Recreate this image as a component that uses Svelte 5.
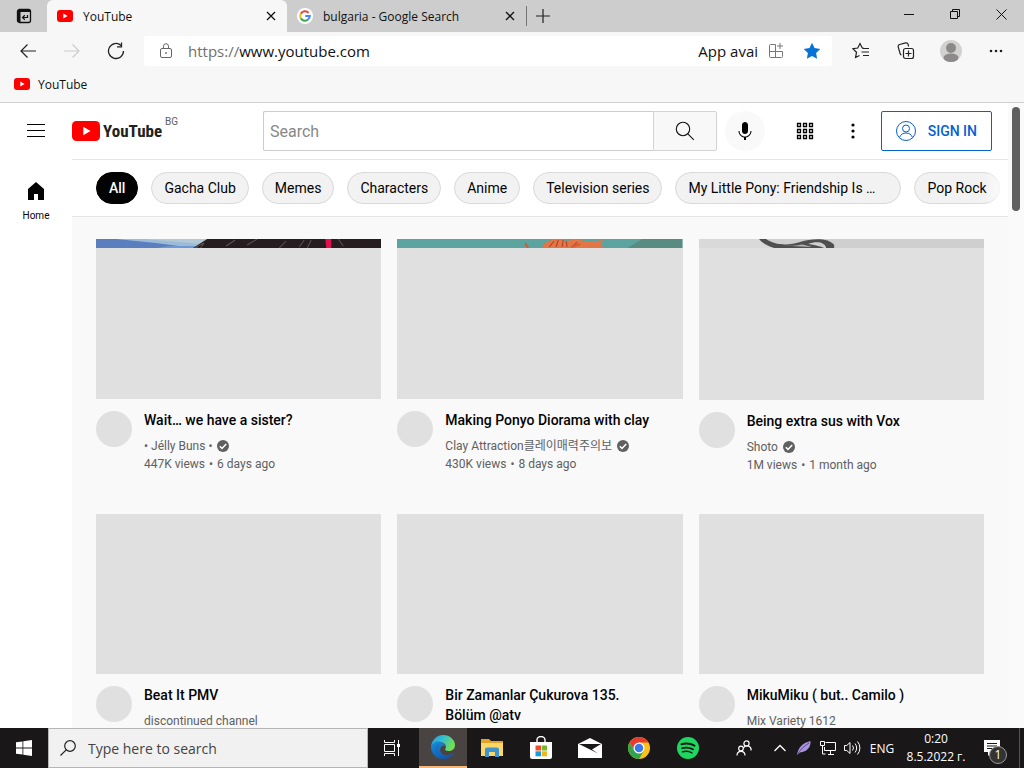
<script lang="ts">
	interface Video {
		title: string;
		channel?: string;
		verified?: boolean;
		views?: string;
		age?: string;
		art?: string;
	}

	const chips = [
		'All',
		'Gacha Club',
		'Memes',
		'Characters',
		'Anime',
		'Television series',
		'My Little Pony: Friendship Is …',
		'Pop Rock'
	];

	const videos: Video[] = [
		{
			title: 'Wait… we have a sister?',
			channel: '• Jélly Buns •',
			verified: true,
			views: '447K views',
			age: '6 days ago',
			art: 'sister'
		},
		{
			title: 'Making Ponyo Diorama with clay',
			channel: 'Clay Attraction클레이매력주의보',
			verified: true,
			views: '430K views',
			age: '8 days ago',
			art: 'ponyo'
		},
		{
			title: 'Being extra sus with Vox',
			channel: 'Shoto',
			verified: true,
			views: '1M views',
			age: '1 month ago',
			art: 'vox'
		},
		{ title: 'Beat It PMV', channel: 'discontinued channel' },
		{ title: 'Bir Zamanlar Çukurova 135. Bölüm @atv' },
		{ title: 'MikuMiku ( but.. Camilo )', channel: 'Mix Variety 1612' }
	];

	let selectedChip = $state('All');
	let query = $state('');
	let address = $state('www.youtube.com');
	let taskQuery = $state('');
</script>

{#snippet youtubeIcon()}
	<svg width="16" height="16" viewBox="0 0 16 16" aria-hidden="true">
		<rect y="2" width="16" height="12" rx="3" fill="#f00" />
		<path d="M6.3 5.5v5L10.6 8z" fill="#fff" />
	</svg>
{/snippet}

{#snippet closeIcon()}
	<svg width="10" height="10" viewBox="0 0 10 10" stroke="#111" stroke-width="1.3" aria-hidden="true">
		<path d="M1 1l8 8M9 1L1 9" />
	</svg>
{/snippet}

<div class="desktop">
	<div class="tabs">
		<button class="tab-actions" aria-label="Tab actions">
			<svg width="16" height="16" viewBox="0 0 16 16" fill="none" stroke="#111" aria-hidden="true">
				<rect x="1.5" y="1.5" width="13" height="13" rx="2" stroke-width="1.3" />
				<path d="M2 3h12" stroke-width="2" />
				<path d="M3 4v10" stroke-width="3" />
				<path d="M11.5 7v2.5H7M8.8 7.3L6.5 9.5l2.3 2.2" stroke-width="1.2" />
			</svg>
		</button>
		<div class="tab active">
			{@render youtubeIcon()}
			<span>YouTube</span>
			<button aria-label="Close YouTube tab">{@render closeIcon()}</button>
		</div>
		<div class="tab">
			<svg width="16" height="16" viewBox="0 0 16 16" fill="none" stroke-width="2" aria-hidden="true">
				<circle cx="8" cy="8" r="8" fill="#fff" />
				<path d="M11.6 4.8A4.8 4.8 0 0 0 3.8 5.7" stroke="#ea4335" />
				<path d="M3.8 5.7a4.8 4.8 0 0 0 0 4.6" stroke="#fbbc05" />
				<path d="M3.8 10.3a4.8 4.8 0 0 0 7.3 1.3" stroke="#34a853" />
				<path d="M11.1 11.6A4.8 4.8 0 0 0 12.8 8H8.3" stroke="#4285f4" />
			</svg>
			<span>bulgaria - Google Search</span>
			<button aria-label="Close Google Search tab">{@render closeIcon()}</button>
		</div>
		<button class="new-tab" aria-label="New tab">
			<svg width="14" height="14" viewBox="0 0 14 14" stroke="#222" stroke-width="1.2" aria-hidden="true">
				<path d="M7 0v14M0 7h14" />
			</svg>
		</button>
		<div class="window-controls">
			<button aria-label="Minimize">
				<svg width="10" height="10" viewBox="0 0 10 10" stroke="#111"><path d="M0 5.5h10" /></svg>
			</button>
			<button aria-label="Restore">
				<svg width="10" height="10" viewBox="0 0 10 10" fill="none" stroke="#111">
					<path d="M.5 2.5h7v7h-7zM2.5 2.5v-2h7v7h-2" />
				</svg>
			</button>
			<button aria-label="Close window">
				<svg width="11" height="11" viewBox="0 0 11 11" stroke="#111"><path d="M.5.5l10 10M10.5.5l-10 10" /></svg>
			</button>
		</div>
	</div>

	<div class="toolbar">
		<div class="nav">
			<button aria-label="Back">
				<svg width="16" height="16" viewBox="0 0 16 16" fill="none" stroke="#222" stroke-width="1.2">
					<path d="M16 8H1M7.5 1.5L1 8l6.5 6.5" />
				</svg>
			</button>
			<button aria-label="Forward" disabled>
				<svg width="16" height="16" viewBox="0 0 16 16" fill="none" stroke="#ccc" stroke-width="1.2">
					<path d="M0 8h15M8.5 1.5L15 8l-6.5 6.5" />
				</svg>
			</button>
			<button aria-label="Refresh">
				<svg width="18" height="18" viewBox="0 0 18 18" fill="none" stroke="#222" stroke-width="1.3">
					<path d="M16.5 9A7.5 7.5 0 1 1 14 3.4M14.5.5v4.3H10" />
				</svg>
			</button>
		</div>
		<div class="address">
			<svg width="14" height="16" viewBox="0 0 14 16" fill="none" stroke="#666" aria-hidden="true">
				<rect x="1.5" y="5.5" width="11" height="9" rx="1.5" />
				<path d="M4.5 5.5V3.2a2.5 2.5 0 0 1 5 0v2.3" />
				<circle cx="7" cy="10" r=".5" fill="#555" />
			</svg>
			<label for="address">https://</label>
			<input id="address" bind:value={address} />
			<span class="available">App avai</span>
			<button aria-label="Install app">
				<svg width="16" height="16" viewBox="0 0 16 16" fill="none" stroke="#777">
					<path d="M7.5 1.5h-5a1 1 0 0 0-1 1v11a1 1 0 0 0 1 1h11a1 1 0 0 0 1-1v-5h-13M7.5 1.5v13M12 0v6M9 3h6" />
				</svg>
			</button>
			<button aria-label="Edit favorite">
				<svg width="18" height="18" viewBox="0 0 18 18" fill="#0873d6">
					<path d="M9 .8l2.5 5.3 5.8.8-4.2 4.1 1 5.8L9 14l-5.1 2.8 1-5.8L.7 6.9l5.8-.8z" />
				</svg>
			</button>
		</div>
		<div class="tools">
			<button aria-label="Favorites">
				<svg width="18" height="18" viewBox="0 0 18 18" fill="none" stroke="#222" stroke-width="1.2">
					<path d="M11.5 6.2l-1.2-.2L8 1.500 5.800 6l-5 .7 3.700 3.500-.9 5.300 3.900-2M10.500 6.500H17M9.500 10H17M11 13.500h6" />
				</svg>
			</button>
			<button aria-label="Collections">
				<svg width="18" height="18" viewBox="0 0 18 18" fill="none" stroke="#222" stroke-width="1.2">
					<rect x="6.5" y="6.5" width="10" height="10" rx="2" />
					<path d="M11.5 8.5v6M8.5 11.5h6M4.5 13a2 2 0 0 1-1.4-1.5L1.2 4.8a2 2 0 0 1 1.4-2.3l6.2-1.6a2 2 0 0 1 2.3 1.4l.5 2.2" />
				</svg>
			</button>
			<button aria-label="Profile">
				<svg width="22" height="22" viewBox="0 0 22 22">
					<circle cx="11" cy="11" r="11" fill="#d3d1cf" />
					<circle cx="11" cy="8" r="5" fill="#8c8a89" />
					<ellipse cx="11" cy="17.8" rx="7.5" ry="4.2" fill="#8c8a89" />
				</svg>
			</button>
			<button aria-label="Settings and more">
				<svg width="14" height="4" viewBox="0 0 14 4" fill="#222">
					<circle cx="2" cy="2" r="1.3" /><circle cx="7" cy="2" r="1.3" /><circle cx="12" cy="2" r="1.3" />
				</svg>
			</button>
		</div>
	</div>

	<div class="bookmarks">
		<a href="#youtube">{@render youtubeIcon()}YouTube</a>
	</div>

	<div class="viewport">
		<div class="page">
			<header>
				<div class="start">
					<button class="round" aria-label="Guide">
						<svg width="18" height="14" viewBox="0 0 18 14" stroke="#030303">
							<path d="M0 .5h18M0 6.5h18M0 12.500h18" />
						</svg>
					</button>
					<a class="logo" href="#home">
						<svg width="28" height="20" viewBox="0 0 28 20" aria-hidden="true">
							<rect width="28" height="20" rx="4.5" fill="#f00" />
							<path d="M11.3 5.8v8.4l7.2-4.2z" fill="#fff" />
						</svg>
						<span>YouTube</span>
						<sup>BG</sup>
					</a>
				</div>
				<form class="search" onsubmit={(e) => e.preventDefault()}>
					<input bind:value={query} placeholder="Search" aria-label="Search" />
					<button class="submit" aria-label="Search YouTube">
						<svg width="20" height="20" viewBox="0 0 20 20" fill="none" stroke="#111" stroke-width="1.1">
							<circle cx="8" cy="8" r="6.7" /><path d="M12.8 12.8l6 6" />
						</svg>
					</button>
					<button type="button" class="round mic" aria-label="Search with your voice">
						<svg width="24" height="24" viewBox="0 0 24 24">
							<path d="M12 3c-1.66 0-3 1.37-3 3.07v5.86c0 1.7 1.34 3.07 3 3.07s3-1.37 3-3.07V6.07C15 4.37 13.66 3 12 3zm6.5 9h-1c0 3.03-2.47 5.5-5.5 5.5S6.5 15.03 6.5 12h-1c0 3.24 2.39 5.93 5.5 6.41V21h2v-2.59c3.11-.48 5.5-3.17 5.5-6.41z" fill="#030303" />
						</svg>
					</button>
				</form>
				<div class="end">
					<button class="round" aria-label="YouTube apps">
						<svg width="18" height="18" viewBox="0 0 18 18" fill="none" stroke="#030303" stroke-width="1.3">
							<path d="M1.500 1.500h3v3h-3zM7.500 1.500h3v3h-3zM13.500 1.500h3v3h-3zM1.500 7.500h3v3h-3zM7.500 7.500h3v3h-3zM13.500 7.500h3v3h-3zM1.500 13.500h3v3h-3zM7.500 13.500h3v3h-3zM13.500 13.500h3v3h-3z" />
						</svg>
					</button>
					<button class="round" aria-label="Settings">
						<svg width="4" height="16" viewBox="0 0 4 16" fill="#030303">
							<circle cx="2" cy="2" r="1.6" /><circle cx="2" cy="8" r="1.6" /><circle cx="2" cy="14" r="1.6" />
						</svg>
					</button>
					<a class="sign-in" href="#signin">
						<svg width="20" height="20" viewBox="0 0 20 20" fill="none" stroke="#065fd4" aria-hidden="true">
							<circle cx="10" cy="10" r="9.5" />
							<circle cx="10" cy="7.5" r="3.5" />
							<path d="M3.5 16.5C4.5 13.5 7 12 10 12s5.5 1.500 6.500 4.500" />
						</svg>
						SIGN IN
					</a>
				</div>
			</header>

			<div class="body">
				<nav>
					<a href="#home">
						<svg width="24" height="24" viewBox="0 0 24 24" aria-hidden="true">
							<path d="M4 10v11h6v-6h4v6h6V10l-8-7z" fill="#030303" />
						</svg>
						Home
					</a>
				</nav>
				<main>
					<div class="chips">
						{#each chips as chip}
							<button
								class:selected={chip === selectedChip}
								class:long={chip.endsWith('…')}
								onclick={() => (selectedChip = chip)}
							>
								{chip}
							</button>
						{/each}
					</div>
					<div class="grid">
						{#each videos as video}
							<article>
								<div class="thumb">
									{#if video.art === 'sister'}
										<svg viewBox="0 0 285 9" preserveAspectRatio="none" aria-hidden="true">
											<path d="M0 0h285v9H0z" fill="#5b7fbe" />
											<path d="M20 0h92L98 9 60 4z" fill="#9dbbd8" />
											<path d="M48 0h64l-6 5z" fill="#b4c9d6" />
											<path d="M62 9l10-2 28 0 4 2z" fill="#6e98d5" />
											<path d="M97 9l14-9h174v9z" fill="#251d1f" />
											<path d="M99 9l9-5-4 5zM130 7l9-6M151 6l10-6M183 9l7-7M203 8l5-7M211 9l4-8M247 7l-5-7" stroke="#5c5552" />
											<path d="M229 0h6v9h-5z" fill="#e50f4b" />
										</svg>
									{:else if video.art === 'ponyo'}
										<svg viewBox="0 0 285 9" preserveAspectRatio="none" aria-hidden="true">
											<path d="M0 0h285v9H0z" fill="#5ba49f" />
											<path d="M245 0h40v9h-55z" fill="#578c80" />
											<path d="M145 9c1-6 8-8 14-9l11 2 8-2 15 3 13-2-3 4 4 4z" fill="#e27745" />
											<path d="M152 8l5-6M159 8l2-7M165 8l1-7M170 8l-1-6M176 7l4-4" stroke="#ad3c30" />
											<path d="M128 4l3 5M174 8l9-3" stroke="#d75b31" stroke-width="2" />
										</svg>
									{:else if video.art === 'vox'}
										<svg viewBox="0 0 285 9" preserveAspectRatio="none" aria-hidden="true">
											<path d="M0 0h285v9H0z" fill="#cfcfcf" />
											<path d="M0 0h60l16 9H0z" fill="#d9d9d9" />
											<path d="M60 0h7c8 6 22 7 34 3 13-4 29-4 34 3v3h-8c-1-6-10-7-18-4 7 1 12 2 16 4H75C68 7 63 4 60 0z" fill="#4f4f4f" />
											<path d="M83 6.500c8 1 15 0 20-1 5 1 8 2 10 2.500z" fill="#b5b5b5" />
										</svg>
									{/if}
								</div>
								<div class="details">
									<div class="avatar"></div>
									<div class="meta">
										<h3>{video.title}</h3>
										{#if video.channel}
											<p>
												{video.channel}
												{#if video.verified}
													<svg width="12" height="12" viewBox="0 0 12 12" aria-label="Verified">
														<circle cx="6" cy="6" r="6" fill="#606060" />
														<path d="M2.8 6.2l2.2 2.2 4.2-4.5" fill="none" stroke="#fff" stroke-width="1.5" />
													</svg>
												{/if}
											</p>
										{/if}
										{#if video.views}
											<p>{video.views}<span class="dot">•</span>{video.age}</p>
										{/if}
									</div>
								</div>
							</article>
						{/each}
					</div>
				</main>
			</div>
		</div>
		<div class="scrollbar"><div></div></div>
	</div>

	<footer>
		<button class="task" aria-label="Start">
			<svg width="16" height="16" viewBox="0 0 16 16" fill="#fff">
				<path d="M0 2.300L6.500 1.400v6.200H0zM7.300 1.200L16 0v7.600H7.300zM0 8.400h6.500v6.200L0 13.700zM7.300 8.400H16V16l-8.700-1.200z" />
			</svg>
		</button>
		<div class="task-search">
			<svg width="16" height="16" viewBox="0 0 16 16" fill="none" stroke="#222" stroke-width="1.2" aria-hidden="true">
				<circle cx="10" cy="6" r="5.3" /><path d="M6.2 9.8L.5 15.5" />
			</svg>
			<input bind:value={taskQuery} placeholder="Type here to search" aria-label="Type here to search" />
		</div>
		<div class="apps">
			<button class="task" aria-label="Task View">
				<svg width="16" height="16" viewBox="0 0 16 16" fill="none" stroke="#fff">
					<path d="M.5 0v2.500h10V0M.5 16v-2.500h10V16M.5 4.500h10v7H.5zM14.500 0v16" />
					<path d="M13 4h3v3h-3z" fill="#fff" stroke="none" />
				</svg>
			</button>
			<button class="task running" aria-label="Microsoft Edge">
				<svg width="24" height="24" viewBox="0 0 24 24">
					<defs>
						<linearGradient id="edge-top" x1="0" y1="0" x2="1" y2=".4">
							<stop offset="0" stop-color="#1f95dc" />
							<stop offset=".5" stop-color="#35bfd0" />
							<stop offset="1" stop-color="#70e052" />
						</linearGradient>
						<linearGradient id="edge-low" x1="0" y1="0" x2=".5" y2="1">
							<stop offset="0" stop-color="#198fdb" />
							<stop offset="1" stop-color="#1458ab" />
						</linearGradient>
					</defs>
					<path d="M0 12C.5 5 5.500 0 12 0c7 0 12 5 12 10 0 4-3 6-6.500 6-3 0-4-1.200-3-2.500C16 11 13.500 7 9 7c-4 0-8 2-9 5z" fill="url(#edge-top)" />
					<path d="M0 12c1-4 5-6 8.500-5.500 3.500.5 5.500 3 5.700 5-1.500-1.500-5-.5-5 3.500 0 4.500 6 7 12.300 3.500.8-.4 1 .2.600.7A12 12 0 0 1 12 24C5 24 0 18.500 0 12z" fill="url(#edge-low)" />
					<path d="M9 8.500c-4 3-5 10 1 15C3.500 21 2.500 11 9 8.500z" fill="#176bbb" />
				</svg>
			</button>
			<button class="task" aria-label="File Explorer">
				<svg width="22" height="18" viewBox="0 0 22 18">
					<path d="M0 0h8l2 2h12v3H0z" fill="#e1a32b" />
					<path d="M0 4h22v13H0z" fill="#fbd669" />
					<path d="M4 10.500a2 2 0 0 1 2-2h10a2 2 0 0 1 2 2V18h-4v-5H8v5H4z" fill="#3d94cf" />
				</svg>
			</button>
			<button class="task" aria-label="Microsoft Store">
				<svg width="24" height="24" viewBox="0 0 24 24">
					<path d="M8 7V4a4 3.500 0 0 1 8 0v3" fill="none" stroke="#fff" stroke-width="1.4" />
					<path d="M1 6h22v15a2 2 0 0 1-2 2H3a2 2 0 0 1-2-2z" fill="#fff" />
					<path d="M6.500 9.500H12v5H6.500z" fill="#e9512c" /><path d="M12.800 9.500h5.200v5h-5.200z" fill="#7ab829" />
					<path d="M6.500 15.300H12v5H6.500z" fill="#1b9bd7" /><path d="M12.800 15.300h5.200v5h-5.200z" fill="#f6b51b" />
				</svg>
			</button>
			<button class="task" aria-label="Mail">
				<svg width="24" height="20" viewBox="0 0 24 20">
					<path d="M0 6l12-6 12 6v14H0z" fill="#fff" /><path d="M1 6h22L14 11.500l6 4z" fill="#1a1718" />
				</svg>
			</button>
			<button class="task" aria-label="Google Chrome">
				<svg width="22" height="22" viewBox="0 0 22 22">
					<circle cx="11" cy="11" r="11" fill="#fbc116" />
					<path d="M1.500 5.500A11 11 0 0 1 20.500 5.500H11L6.500 13.500z" fill="#e63b2e" />
					<path d="M1.500 5.500A11 11 0 0 0 11 22l5-8.500H6.200z" fill="#2fa350" />
					<circle cx="11" cy="11" r="5.5" fill="#fff" /><circle cx="11" cy="11" r="4.3" fill="#3b79e8" />
				</svg>
			</button>
			<button class="task" aria-label="Spotify">
				<svg width="22" height="22" viewBox="0 0 22 22" fill="none" stroke="#171b18" stroke-linecap="round">
					<circle cx="11" cy="11" r="11" fill="#1ed760" stroke="none" />
					<path d="M4.500 7.300c4.500-1.300 9-.9 13 1.300" stroke-width="2" />
					<path d="M5 11.200c4-1.100 8-.7 11.300 1.200" stroke-width="1.7" />
					<path d="M5.500 14.800c3.500-.9 6.700-.5 9.500 1" stroke-width="1.4" />
				</svg>
			</button>
		</div>
		<div class="tray">
			<button class="people" aria-label="People">
				<svg width="16" height="16" viewBox="0 0 16 16" fill="none" stroke="#fff" stroke-width="1.2">
					<circle cx="10.5" cy="3.5" r="2.6" /><path d="M7.500 8a4 4 0 0 1 7.500 2.500" />
					<circle cx="5" cy="8.5" r="2.3" /><path d="M1 15.500c0-5.500 8-5.500 8 0" />
				</svg>
			</button>
			<button aria-label="Show hidden icons">
				<svg width="12" height="8" viewBox="0 0 12 8" fill="none" stroke="#fff" stroke-width="1.3"><path d="M.5 7L6 1.500 11.500 7" /></svg>
			</button>
			<button aria-label="Feather">
				<svg width="16" height="16" viewBox="0 0 16 16">
					<path d="M1 15C2 8 6 3 14.500 1 15 7 11 12 4 12.500z" fill="#a994dd" />
					<path d="M1 15C4 10 8 6 13 3" fill="none" stroke="#5c468f" />
				</svg>
			</button>
			<button aria-label="Network">
				<svg width="16" height="14" viewBox="0 0 16 14" fill="none" stroke="#fff">
					<path d="M5.500 1.500h10v8h-11V6M8 13.500h6M10.500 9.500v4M.5.500h4v4h-4zM2.500 4.500v8.500h3" />
				</svg>
			</button>
			<button aria-label="Volume">
				<svg width="17" height="14" viewBox="0 0 17 14" fill="none" stroke="#fff">
					<path d="M.5 4.500h2.300L6 1.500v11l-3.200-3H.5zM8.500 4.500a4 4 0 0 1 0 5M11 2.500a7 7 0 0 1 0 9M13.500.5a10 10 0 0 1 0 13" />
				</svg>
			</button>
			<button class="lang">ENG</button>
			<button class="clock"><span>0:20</span><span>8.5.2022 г.</span></button>
			<button class="notices" aria-label="Notifications, 1 new">
				<svg width="16" height="16" viewBox="0 0 16 16">
					<path d="M0 0h16v12H8l-4 4v-4H0z" fill="#fff" />
					<path d="M3 3.500h10M3 6h10M3 8.500h7" stroke="#1a1718" />
				</svg>
				<span>1</span>
			</button>
		</div>
	</footer>
</div>

<style>
	:global(body) {
		margin: 0;
	}

	.desktop {
		display: flex;
		flex-direction: column;
		height: 100vh;
		overflow: hidden;
		background: #f7f7f7;
		color: #111;
		font-family: 'Open Sans', 'Noto Sans', sans-serif;
		font-size: 12px;
	}

	button {
		display: flex;
		align-items: center;
		justify-content: center;
		padding: 0;
		border: 0;
		background: none;
		color: inherit;
		font: inherit;
	}

	a {
		color: inherit;
		text-decoration: none;
	}

	input {
		min-width: 0;
		padding: 0;
		border: 0;
		outline: 0;
		background: none;
		color: inherit;
		font: inherit;
	}

	svg {
		display: block;
		flex: none;
	}

	.tabs {
		display: flex;
		flex: none;
		height: 32px;
		background: #cdcdcd;
	}

	.tab-actions {
		width: 47px;
	}

	.tab {
		display: flex;
		align-items: center;
		gap: 10px;
		box-sizing: border-box;
		width: 240px;
		padding: 0 8px 0 10px;
	}

	.tab:not(.active) {
		margin: 6px 0;
		border-right: 1px solid #777;
	}

	.tab.active {
		border-radius: 6px 6px 0 0;
		background: #f7f7f7;
	}

	.tab span {
		flex: 1;
		white-space: nowrap;
	}

	.tab button {
		width: 16px;
		height: 16px;
	}

	.new-tab {
		width: 32px;
	}

	.window-controls {
		display: flex;
		margin-left: auto;
	}

	.window-controls button {
		width: 46px;
		height: 28px;
	}

	.toolbar {
		display: flex;
		flex: none;
		align-items: center;
		gap: 6px;
		height: 38px;
		padding: 0 6px;
	}

	.nav,
	.tools {
		display: flex;
	}

	.nav button {
		width: 44px;
		height: 30px;
	}

	.tools button {
		width: 45px;
		height: 30px;
	}

	.address {
		display: flex;
		flex: 1;
		align-items: center;
		min-width: 0;
		height: 30px;
		padding: 0 2px 0 15px;
		border-radius: 2px;
		background: #fff;
		font-size: 15px;
	}

	.address label {
		margin-left: 15px;
		color: #6f6f6f;
	}

	.address input {
		flex: 1;
	}

	.address button {
		width: 36px;
	}

	.bookmarks {
		flex: none;
		height: 32px;
		border-bottom: 1px solid #d0d0d0;
	}

	.bookmarks a {
		display: flex;
		align-items: center;
		gap: 8px;
		height: 28px;
		padding-left: 14px;
	}

	.viewport {
		display: flex;
		flex: 1;
		min-height: 0;
		background: #fff;
		color: #030303;
		font-family: Roboto, 'Noto Sans CJK KR', sans-serif;
		font-size: 14px;
	}

	.page {
		flex: 1;
		min-width: 0;
		overflow: hidden;
	}

	.scrollbar {
		width: 16px;
		background: #fafafa;
	}

	.scrollbar div {
		width: 8px;
		height: 104px;
		margin: 4px;
		border-radius: 4px;
		background: #606060;
	}

	header {
		display: flex;
		align-items: center;
		height: 56px;
		padding: 0 16px;
	}

	.start {
		display: flex;
		align-items: center;
		gap: 16px;
		width: 247px;
	}

	.round {
		width: 40px;
		height: 40px;
		border-radius: 50%;
	}

	.logo {
		display: flex;
		align-items: center;
		gap: 3px;
		color: #212121;
	}

	.logo span {
		font: bold 17px/20px 'Roboto Condensed', 'Liberation Sans Narrow', Roboto, sans-serif;
	}

	.logo sup {
		align-self: flex-start;
		margin-top: -4px;
		color: #606060;
		font-size: 10px;
		line-height: 10px;
	}

	.search {
		display: flex;
		flex: 1;
	}

	.search input {
		flex: 1;
		padding: 0 6px;
		border: 1px solid #ccc;
		border-right: 0;
		border-radius: 2px 0 0 2px;
		font-size: 16px;
	}

	.search input::placeholder {
		color: #888;
	}

	.submit {
		box-sizing: border-box;
		width: 64px;
		height: 40px;
		border: 1px solid #d3d3d3;
		border-radius: 0 2px 2px 0;
		background: #f8f8f8;
	}

	.mic {
		margin-left: 8px;
		background: #f9f9f9;
	}

	.end {
		display: flex;
		gap: 8px;
		margin-left: 20px;
	}

	.sign-in {
		display: flex;
		align-items: center;
		gap: 12px;
		box-sizing: border-box;
		height: 40px;
		padding: 0 14px;
		border: 1px solid #065fd4;
		border-radius: 2px;
		color: #065fd4;
		font-weight: 500;
		white-space: nowrap;
	}

	.body {
		display: flex;
	}

	nav {
		flex: none;
		width: 72px;
	}

	nav a {
		display: flex;
		flex-direction: column;
		align-items: center;
		gap: 6px;
		padding-top: 20px;
		font-size: 10px;
		line-height: 14px;
	}

	main {
		flex: 1;
		min-width: 0;
		background: #f9f9f9;
	}

	.chips {
		position: relative;
		display: flex;
		gap: 13px;
		padding: 12px 0 12px 24px;
		border: solid #e5e5e5;
		border-width: 1px 0;
		background: #fff;
		overflow: hidden;
	}

	.chips::after {
		position: absolute;
		inset: 0 0 0 auto;
		width: 24px;
		background: linear-gradient(to right, transparent, #fff);
		content: '';
	}

	.chips button {
		box-sizing: border-box;
		flex: none;
		height: 32px;
		padding: 0 12px;
		border: 1px solid #d9d9d9;
		border-radius: 16px;
		background: #f2f2f2;
		line-height: 20px;
		white-space: nowrap;
	}

	.chips button.selected {
		border-color: #030303;
		background: #030303;
		color: #fff;
		font-weight: 500;
	}

	.chips button.long {
		justify-content: flex-start;
		min-width: 226px;
	}

	.grid {
		display: grid;
		grid-template-columns: repeat(3, 1fr);
		gap: 40px 16px;
		padding: 22px 24px;
	}

	.thumb {
		aspect-ratio: 16 / 9;
		background: #e0e0e0;
	}

	.thumb svg {
		width: 100%;
		height: 9px;
	}

	.details {
		display: flex;
		gap: 12px;
	}

	.avatar {
		flex: none;
		width: 36px;
		height: 36px;
		margin-top: 12px;
		border-radius: 50%;
		background: #e0e0e0;
	}

	.meta {
		padding-top: 11px;
	}

	h3 {
		margin: 0 0 7px;
		padding-right: 24px;
		font-size: 14px;
		font-weight: 500;
		line-height: 20px;
	}

	p {
		display: flex;
		align-items: center;
		height: 18px;
		margin: 0;
		color: #606060;
		font-size: 12px;
		line-height: 18px;
		white-space: nowrap;
	}

	p svg {
		margin-left: 5px;
	}

	.dot {
		margin: 0 4px;
	}

	footer {
		display: flex;
		flex: none;
		height: 40px;
		background: #1a1718;
		color: #fff;
	}

	.task {
		width: 48px;
	}

	.running {
		margin-left: 2px;
		border-bottom: 2px solid #f5b878;
		background: #494442;
	}

	.task-search {
		display: flex;
		align-items: center;
		gap: 12px;
		box-sizing: border-box;
		width: 320px;
		padding: 0 11px;
		border: 1px solid #b5b5b5;
		background: #f1f1f1;
		color: #333;
		font-size: 14px;
	}

	.task-search input {
		flex: 1;
	}

	.task-search input::placeholder {
		color: #444;
	}

	.apps {
		display: flex;
		gap: 1px;
	}

	.tray {
		display: flex;
		margin-left: auto;
		padding-right: 4px;
	}

	.tray button {
		width: 24px;
	}

	.tray .people {
		width: 48px;
	}

	.tray .lang {
		width: 36px;
	}

	.tray .clock {
		flex-direction: column;
		width: 72px;
		line-height: 18px;
		white-space: nowrap;
	}

	.tray .notices {
		position: relative;
		justify-content: flex-start;
		width: 48px;
		padding-left: 12px;
		border-right: 1px solid #555;
	}

	.notices span {
		position: absolute;
		right: 12px;
		bottom: 4px;
		width: 16px;
		height: 16px;
		border: 1px solid #999;
		border-radius: 50%;
		background: #333;
		font-size: 12px;
		line-height: 16px;
	}
</style>
